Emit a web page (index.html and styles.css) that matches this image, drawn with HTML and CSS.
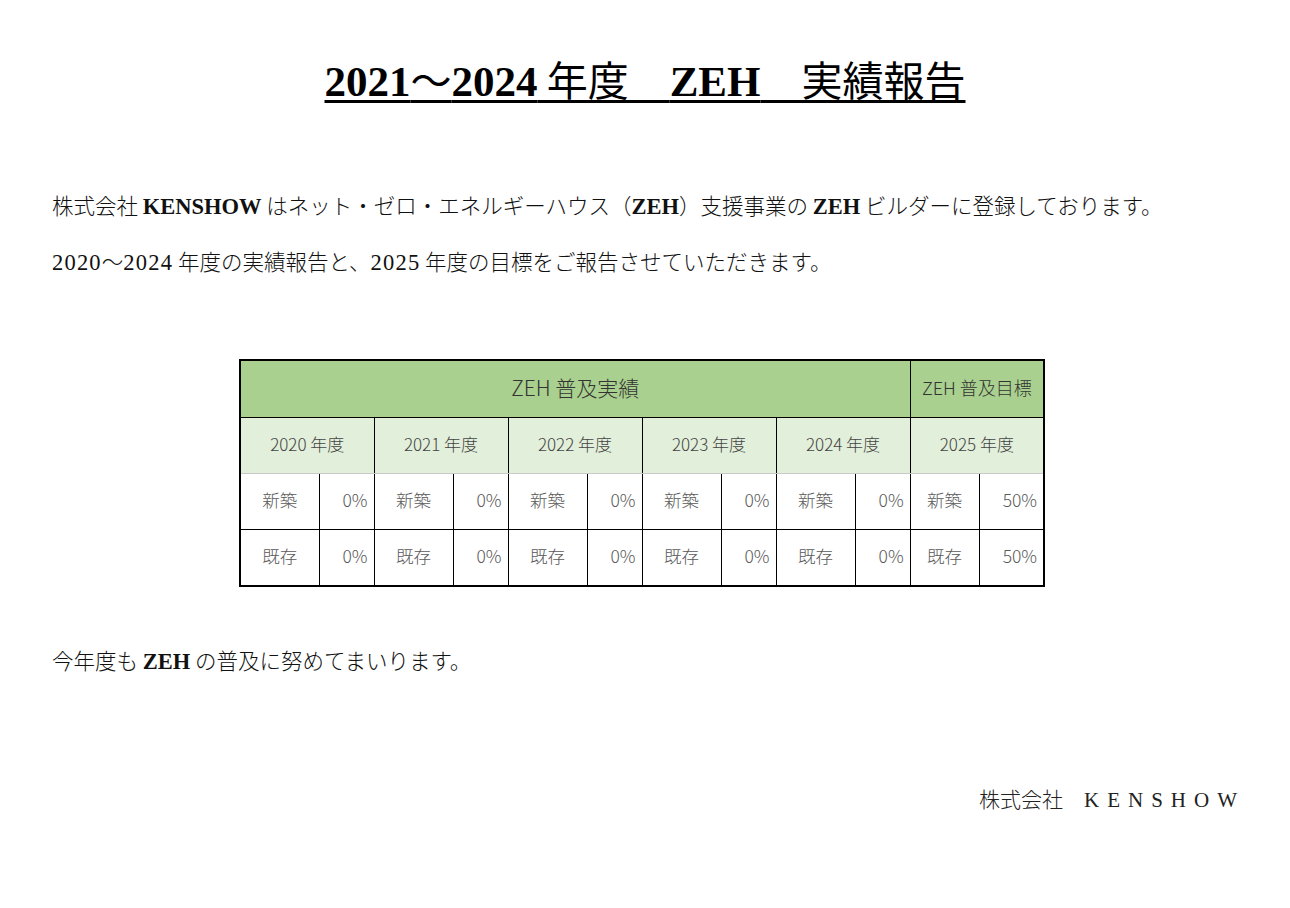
FILE: index.html
```html
<!DOCTYPE html>
<html lang="ja">
<head>
<meta charset="utf-8">
<link rel="stylesheet" href="styles.css">
</head>
<body>
<div class="page">
  <h1 class="title"><span class="lat">2021</span>～<span class="lat">2024</span> 年度　<span class="lat">ZEH</span>　実績報告</h1>
  <p class="text first"><span class="cjk">株式会社</span> <span class="lat b">KENSHOW</span> はネット・ゼロ・エネルギーハウス（<span class="lat b">ZEH</span>）支援事業の <span class="lat b">ZEH</span> ビルダーに登録しております。</p>
  <p class="text"><span class="lat num">2020</span>～<span class="lat num">2024</span> 年度の実績報告と、<span class="lat num">2025</span> 年度の目標をご報告させていただきます。</p>

  <table class="zeh">
    <colgroup>
      <col class="c-a"><col class="c-b">
      <col class="c-a"><col class="c-b">
      <col class="c-a"><col class="c-b">
      <col class="c-a"><col class="c-b">
      <col class="c-a"><col class="c-b">
      <col class="c-e"><col class="c-f">
    </colgroup>
    <tr class="r-head">
      <th colspan="10" class="h-main">ZEH 普及実績</th>
      <th colspan="2" class="h-goal">ZEH 普及目標</th>
    </tr>
    <tr class="r-year">
      <td colspan="2">2020 年度</td>
      <td colspan="2">2021 年度</td>
      <td colspan="2">2022 年度</td>
      <td colspan="2">2023 年度</td>
      <td colspan="2">2024 年度</td>
      <td colspan="2">2025 年度</td>
    </tr>
    <tr class="r-data">
      <td class="lbl">新築</td><td class="val">0%</td>
      <td class="lbl">新築</td><td class="val">0%</td>
      <td class="lbl">新築</td><td class="val">0%</td>
      <td class="lbl">新築</td><td class="val">0%</td>
      <td class="lbl">新築</td><td class="val">0%</td>
      <td class="lbl">新築</td><td class="val">50%</td>
    </tr>
    <tr class="r-data last">
      <td class="lbl">既存</td><td class="val">0%</td>
      <td class="lbl">既存</td><td class="val">0%</td>
      <td class="lbl">既存</td><td class="val">0%</td>
      <td class="lbl">既存</td><td class="val">0%</td>
      <td class="lbl">既存</td><td class="val">0%</td>
      <td class="lbl">既存</td><td class="val">50%</td>
    </tr>
  </table>

  <p class="text closing">今年度も <span class="lat b">ZEH</span> の普及に努めてまいります。</p>
  <p class="sign">株式会社　<span class="lat wide">KENSHOW</span></p>
</div>
</body>
</html>
```

FILE: styles.css
```css
html, body {
  margin: 0;
  padding: 0;
  background: #ffffff;
}

.page {
  width: 1290px;
  height: 908px;
  box-sizing: border-box;
  padding: 56px 0 0 0;
  font-family: "Liberation Serif", "Noto Sans CJK JP", serif;
  color: #111;
}

.lat {
  font-family: "Liberation Serif", serif;
}

.b {
  font-weight: bold;
}

.title {
  margin: 0;
  text-align: center;
  font-size: 41px;
  line-height: 44px;
  font-weight: normal;
  font-family: "Noto Sans CJK JP", sans-serif;
  text-decoration: underline;
  text-decoration-thickness: 3px;
  text-underline-offset: 4px;
  color: #000;
}

.title .lat {
  font-weight: bold;
  font-size: 43px;
}

.text {
  margin: 0;
  padding-left: 52px;
  font-family: "Noto Sans CJK JP", sans-serif;
  font-weight: 300;
  font-size: 21.5px;
  line-height: 28px;
  color: #111;
}

.text .lat {
  font-size: 22.5px;
}

.text .num {
  letter-spacing: 1.2px;
}

.text.first {
  margin-top: 87px;
}

.text + .text {
  margin-top: 26px;
}

.zeh {
  margin: 82px 0 0 239px;
  border-collapse: collapse;
  table-layout: fixed;
  width: 804px;
  font-family: "Noto Sans CJK JP", sans-serif;
  font-weight: 300;
  font-size: 17.5px;
  color: #595959;
}

.c-a { width: 79px; }
.c-b { width: 55px; }
.c-e { width: 69px; }
.c-f { width: 65px; }

.zeh th, .zeh td {
  border: 1px solid #000;
  padding: 0 0 5px 0;
  text-align: center;
}

.r-head th {
  height: 51px;
  background: #a9d08e;
  font-weight: 300;
  color: #333;
}

.h-main {
  font-size: 21px;
}

.h-goal {
  font-size: 18px;
}

.zeh .r-head th {
  border-top: 2px solid #000;
}

.r-year td {
  height: 50px;
  background: #e2efda;
  font-size: 17px;
  color: #444;
  border-bottom-color: #c8c8c8;
}

.r-data td {
  height: 50px;
  background: #fff;
}

.r-data:first-of-type td {
  border-top-color: #c8c8c8;
}

.zeh .lbl {
  text-align: center;
}

.zeh .val {
  text-align: right;
  padding-right: 6px;
}

.zeh tr > :first-child {
  border-left: 2px solid #000;
}

.zeh tr > :last-child {
  border-right: 2px solid #000;
}

.zeh .last td {
  border-bottom: 2px solid #000;
}

.closing {
  margin-top: 59px;
}

.sign {
  margin: 108px 0 0 0;
  padding-right: 45px;
  text-align: right;
  font-family: "Noto Sans CJK JP", sans-serif;
  font-weight: 300;
  font-size: 21px;
  line-height: 28px;
  color: #222;
}

.wide {
  font-size: 21px;
  letter-spacing: 8px;
}
```
